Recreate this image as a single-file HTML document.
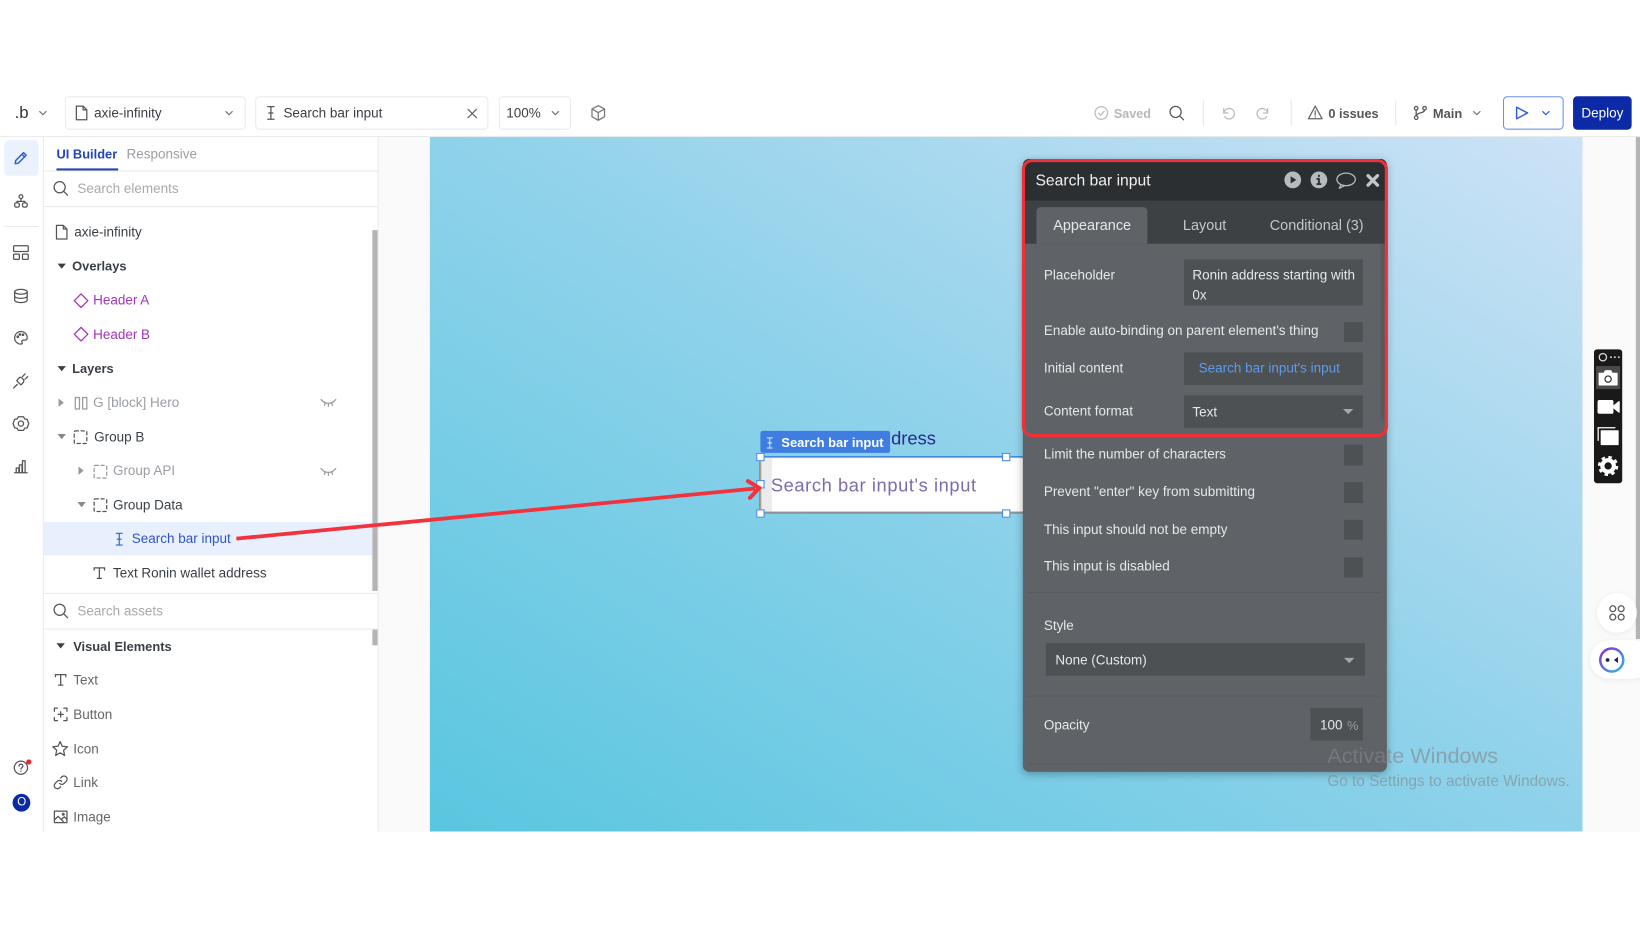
<!DOCTYPE html>
<html lang="en"><head><meta charset="utf-8"><title>Bubble editor</title>
<style>
html,body{margin:0;padding:0;width:1640px;height:924px;overflow:hidden;background:#fff}
#w{position:absolute;left:0;top:0;width:1568px;height:884px;transform:scale(1.04592);transform-origin:0 0;filter:blur(.35px);font-family:"Liberation Sans",sans-serif;color:#3a3f45;font-size:12.9px}
#w div,#w svg{position:absolute}
.t{white-space:nowrap;line-height:1;transform:translateY(calc(-50% + .8px))}
svg{overflow:visible;fill:none;stroke:#555;stroke-width:1.2;stroke-linecap:round;stroke-linejoin:round}
.g{color:#9a9ea3}.p{color:#a135b8}.b{font-weight:bold;font-size:12.3px}
.l{color:#e6e7e8}.in{background:#4d5154}
.tri{width:0;height:0;border-left:4px solid transparent;border-right:4px solid transparent;border-top:5px solid #3a3f45}
.trr{width:0;height:0;border-top:4px solid transparent;border-bottom:4px solid transparent;border-left:5px solid #999}
.box{border:1px solid #e9eaec;border-radius:4px;box-sizing:border-box;background:#fff}
.sep{width:1px;height:24px;background:#e6e6e6;top:96px}
.h{width:6px;height:6px;background:#fff;border:1px solid #3f8ae0}
.cb{left:1285px;width:18px;height:19px;background:#4d5154}
.car{width:0;height:0;border-left:5px solid transparent;border-right:5px solid transparent;border-top:5px solid #a5a8ab}
</style></head><body>
<div id="w">
<svg width="0" height="0" style="left:0;top:0"><defs>
<symbol id="s" viewBox="0 0 16 16"><circle cx="7" cy="7" r="5.3"/><path d="M11 11l3.600 3.600"/></symbol>
<symbol id="d" viewBox="0 0 16 16"><path d="M3 1.500h6.500l3.500 3.500v9.500H3zM9.500 1.500V5H13"/></symbol>
<symbol id="c" viewBox="0 0 12 12"><path d="M3 4.700L6 7.700l3-3" stroke="#777"/></symbol>
<symbol id="cb" viewBox="0 0 12 12"><path d="M3 4.700L6 7.700l3-3" stroke="#2f5fd8"/></symbol>
<symbol id="i" viewBox="0 0 12 16"><path d="M3 2h6M3 14h6M6 2v12M4 8h4"/></symbol>
<symbol id="gr" viewBox="0 0 14 14"><rect x="1" y="1" width="12" height="12" rx="1" stroke-dasharray="3 2.600"/></symbol>
<symbol id="T" viewBox="0 0 14 14"><path d="M2 4V2h10v2M7 2v10M5 12h4"/></symbol>
<symbol id="e" viewBox="0 0 16 8"><path d="M2 2c3 3.500 9 3.500 12 0M1 1l2 2M15 1l-2 2M5 4l-.8 2.500M8 5v2.500M11 4l.8 2.500" stroke="#999"/></symbol>
</defs></svg>

<!-- canvas -->
<div style="left:362px;top:131px;width:1206px;height:664px;background:#fafafa"></div>
<div style="left:411px;top:131px;width:1102px;height:664px;background:linear-gradient(to top right,#5ac6e0 0%,#8ed2ea 50%,#cde2f6 100%)"></div>
<div style="left:1564px;top:131px;width:4px;height:480px;background:#b4b4b4"></div>

<!-- toolbar -->
<div style="left:0;top:130px;width:1568px;height:1px;background:#e8eaec"></div>
<div class="t" style="left:14px;top:108px;font-size:16px;color:#333">.b</div>
<svg style="left:35px;top:102px" width="12" height="12"><use href="#c"/></svg>
<div class="box" style="left:62px;top:92px;width:173px;height:32px"></div>
<svg style="left:70px;top:100px" width="16" height="16"><use href="#d"/></svg>
<div class="t" style="left:90px;top:108px">axie-infinity</div>
<svg style="left:213px;top:102px" width="12" height="12"><use href="#c"/></svg>
<div class="box" style="left:244px;top:92px;width:223px;height:32px"></div>
<svg style="left:253px;top:100px" width="12" height="16"><use href="#i"/></svg>
<div class="t" style="left:271px;top:108px">Search bar input</div>
<svg style="left:446px;top:103px" width="11" height="11"><path d="M1.500 1.500l8 8M9.500 1.500l-8 8" stroke="#666"/></svg>
<div class="box" style="left:477px;top:92px;width:69px;height:32px"></div>
<div class="t" style="left:484px;top:108px">100%</div>
<svg style="left:525px;top:102px" width="12" height="12"><use href="#c"/></svg>
<svg style="left:564px;top:100px" width="16" height="16"><path d="M8 1l6 3.200v7.400L8 15l-6-3.400V4.200zM2 4.200l6 3.400 6-3.400M8 7.600V15" stroke="#777"/></svg>

<svg style="left:1046px;top:101px" width="14" height="14"><circle cx="7" cy="7" r="6" stroke="#bbb"/><path d="M4.300 7.200l2 2 3.500-4" stroke="#bbb"/></svg>
<div class="t b" style="left:1065px;top:108px;color:#b5b7ba;font-size:12px">Saved</div>
<svg style="left:1117px;top:100px" width="16" height="16"><use href="#s"/></svg>
<div class="sep" style="left:1150px"></div>
<svg style="left:1167px;top:101px" width="14" height="14"><path d="M3 3v4h4M3.200 7A5 5 0 1 1 4 10.500" stroke="#bbb"/></svg>
<svg style="left:1201px;top:101px" width="14" height="14"><path d="M11 3v4H7M10.800 7A5 5 0 1 0 10 10.500" stroke="#bbb"/></svg>
<div class="sep" style="left:1234px"></div>
<svg style="left:1250px;top:100px" width="15" height="15"><path d="M7.500 1.500L14 13.500H1zM7.500 6v4M7.500 11.800v.2" stroke="#666"/></svg>
<div class="t b" style="left:1270px;top:108px;font-size:12.200px;color:#555">0 issues</div>
<div class="sep" style="left:1334px"></div>
<svg style="left:1351px;top:101px" width="14" height="14"><circle cx="3" cy="2.500" r="1.700"/><circle cx="3" cy="11.500" r="1.700"/><circle cx="11" cy="2.500" r="1.700"/><path d="M3 4.200v5.600M11 4.200C11 7.500 5 6 3.500 9"/></svg>
<div class="t b" style="left:1370px;top:108px;color:#555">Main</div>
<svg style="left:1406px;top:102px" width="12" height="12"><use href="#c"/></svg>
<div style="left:1437px;top:92px;width:58px;height:32px;box-sizing:border-box;border:1.500px solid #6a90ea;border-radius:4px"></div>
<svg style="left:1448px;top:101px" width="14" height="14"><path d="M2 1.500l10.500 5.500L2 12.500z" stroke="#2f5fd8" stroke-width="1.400"/></svg>
<svg style="left:1472px;top:102px" width="12" height="12"><use href="#cb"/></svg>
<div style="left:1504px;top:92px;width:56px;height:32px;background:#0c2aa6;border-radius:4px"></div>
<div class="t" style="left:1512px;top:108px;color:#fff">Deploy</div>

<!-- rail -->
<div style="left:41px;top:131px;width:1px;height:664px;background:#e8eaec"></div>
<div style="left:4px;top:134px;width:33px;height:34px;background:#ebf1fd;border-radius:4px"></div>
<svg style="left:13px;top:144px" width="14" height="14"><path d="M2 9.500L9.500 2 12 4.500 4.500 12 1.500 12.500zM8 3.500L10.500 6" stroke="#2f5fd8" stroke-width="1.400"/></svg>
<svg style="left:13px;top:185px" width="14" height="14"><circle cx="7" cy="3" r="1.800"/><rect x="1" y="9" width="4.500" height="4" rx="1.500"/><rect x="8.500" y="9" width="4.500" height="4" rx="1.500"/><path d="M7 5v2.500M3.200 9V7.500h7.600V9"/></svg>
<div style="left:4px;top:216px;width:33px;height:1px;background:#e8eaec"></div>
<svg style="left:12px;top:234px" width="16" height="15"><rect x="1" y="1" width="14" height="5.500" rx=".8"/><rect x="1" y="9" width="5.500" height="5" rx=".8"/><rect x="9.500" y="9" width="5.500" height="5" rx=".8"/></svg>
<svg style="left:13px;top:276px" width="14" height="14"><ellipse cx="7" cy="3" rx="6" ry="2.300"/><path d="M1 3v8c0 1.300 2.700 2.300 6 2.300s6-1 6-2.300V3M1 7c0 1.300 2.700 2.300 6 2.300S13 8.300 13 7"/></svg>
<svg style="left:13px;top:316px" width="14" height="14"><path d="M7 1a6 6 0 0 0 0 12c1.500 0 1.500-1 1-1.800-.6-1 0-2 1.300-2H11c1.300 0 2-1 2-2.500C13 3.500 10.300 1 7 1z"/><circle cx="4" cy="6" r=".7"/><circle cx="6" cy="3.800" r=".7"/><circle cx="9" cy="4" r=".7"/></svg>
<svg style="left:12px;top:356px" width="16" height="16"><path d="M1 15l3.500-3.500M4 8l4 4 2-2c1-1.200 1-2.500 0-3.500L9 5.500C8 4.500 6.800 4.700 6 5.500zM9.500 4L12 1.500M12 6.500L14.500 4"/></svg>
<svg style="left:12px;top:397px" width="16" height="16"><path d="M5.500 1.500h5l1 2 2.500.5 1.500 4-1.500 4-2.500.5-1 2h-5l-1-2-2.500-.5L.5 8 2 4l2.500-.5z"/><circle cx="8" cy="8" r="2.500"/></svg>
<svg style="left:13px;top:439px" width="14" height="14"><path d="M1 13h12M2.500 13V8.500h2.500V13M5.500 13V5.500H8V13M8.500 13V1.500H11V13"/></svg>
<svg style="left:13px;top:727px" width="14" height="14"><circle cx="7" cy="7" r="6.300"/><path d="M5.200 5.500C5.200 4.300 6 3.700 7 3.700s1.900.7 1.900 1.700c0 1.500-1.900 1.500-1.900 3M7 10.300v.2"/></svg>
<div style="left:25px;top:726px;width:5px;height:5px;border-radius:50%;background:#f0222c"></div>
<div style="left:12px;top:759px;width:17px;height:17px;border-radius:50%;background:#0c2aa6"></div>
<div class="t" style="left:16.500px;top:767px;color:#fff;font-size:11px">O</div>

<!-- sidebar -->
<div style="left:42px;top:131px;width:320px;height:664px;background:#fff;border-right:1px solid #e8eaec;box-sizing:border-box"></div>
<div class="t b" style="left:54px;top:147px;color:#2244b8">UI Builder</div>
<div class="t" style="left:121px;top:147px;color:#9a9ea3">Responsive</div>
<div style="left:42px;top:163px;width:319px;height:1px;background:#e8eaec"></div>
<div style="left:54px;top:161px;width:59px;height:2px;background:#2244b8"></div>
<svg style="left:50px;top:172px" width="16" height="16"><use href="#s"/></svg>
<div class="t g" style="left:74px;top:180px;color:#a6a9ad">Search elements</div>
<div style="left:42px;top:197px;width:319px;height:1px;background:#e8eaec"></div>

<svg style="left:51px;top:214px" width="16" height="16"><use href="#d"/></svg>
<div class="t" style="left:71px;top:222px">axie-infinity</div>
<div class="tri" style="left:55px;top:252px"></div>
<div class="t b" style="left:69px;top:254px">Overlays</div>
<svg style="left:70px;top:280px" width="15" height="15"><path d="M7.500 1L14 7.500 7.500 14 1 7.500z" stroke="#a135b8"/></svg>
<div class="t p" style="left:89px;top:287px">Header A</div>
<svg style="left:70px;top:312px" width="15" height="15"><path d="M7.500 1L14 7.500 7.500 14 1 7.500z" stroke="#a135b8"/></svg>
<div class="t p" style="left:89px;top:320px">Header B</div>
<div class="tri" style="left:55px;top:350px"></div>
<div class="t b" style="left:69px;top:352px">Layers</div>

<div class="trr" style="left:56px;top:381px"></div>
<svg style="left:71px;top:379px" width="13" height="13"><rect x="1" y="1" width="4" height="11" stroke="#999"/><rect x="8" y="1" width="4" height="11" stroke="#999"/></svg>
<div class="t g" style="left:89px;top:385px">G [block] Hero</div>
<svg style="left:306px;top:381px" width="16" height="8"><use href="#e"/></svg>
<div class="tri" style="left:55px;top:415px;border-top-color:#888"></div>
<svg style="left:70px;top:411px" width="14" height="14"><use href="#gr"/></svg>
<div class="t" style="left:90px;top:418px">Group B</div>
<div class="trr" style="left:75px;top:446px"></div>
<svg style="left:89px;top:444px" width="14" height="14"><use href="#gr" stroke="#999"/></svg>
<div class="t g" style="left:108px;top:450px">Group API</div>
<svg style="left:306px;top:447px" width="16" height="8"><use href="#e"/></svg>
<div class="tri" style="left:74px;top:480px;border-top-color:#888"></div>
<svg style="left:89px;top:476px" width="14" height="14"><use href="#gr"/></svg>
<div class="t" style="left:108px;top:483px">Group Data</div>
<div style="left:42px;top:499px;width:314px;height:32px;background:#e8f0fd"></div>
<svg style="left:108px;top:508px" width="12" height="15"><use href="#i" stroke="#2f5fd8"/></svg>
<div class="t" style="left:126px;top:515px;color:#2f55c8">Search bar input</div>
<svg style="left:88px;top:541px" width="14" height="14"><use href="#T"/></svg>
<div class="t" style="left:108px;top:548px">Text Ronin wallet address</div>
<div style="left:356px;top:220px;width:5px;height:345px;background:#b4b4b4"></div>
<div style="left:42px;top:567px;width:319px;height:1px;background:#e8eaec"></div>
<svg style="left:50px;top:576px" width="16" height="16"><use href="#s"/></svg>
<div class="t" style="left:74px;top:584px;color:#a6a9ad">Search assets</div>
<div style="left:42px;top:601px;width:319px;height:1px;background:#e8eaec"></div>
<div style="left:356px;top:602px;width:5px;height:15px;background:#b4b4b4"></div>
<div class="tri" style="left:54px;top:615px"></div>
<div class="t b" style="left:70px;top:618px">Visual Elements</div>
<svg style="left:51px;top:643px" width="14" height="14"><use href="#T"/></svg>
<div class="t" style="left:70px;top:650px;color:#666">Text</div>
<svg style="left:51px;top:676px" width="14" height="14"><path d="M1 4V1h3M10 1h3v3M13 10v3h-3M4 13H1v-3M7 4.500v5M4.500 7h5"/></svg>
<div class="t" style="left:70px;top:683px;color:#666">Button</div>
<svg style="left:50px;top:708px" width="15" height="15"><path d="M7.500 1l2 4.500 5 .5-3.700 3.300 1 5-4.300-2.500-4.300 2.500 1-5L.5 6l5-.5z"/></svg>
<div class="t" style="left:70px;top:716px;color:#666">Icon</div>
<svg style="left:51px;top:741px" width="14" height="14"><path d="M6 8a3 3 0 0 0 4.300 0l2-2A3 3 0 0 0 8 1.800L7 2.800M8 6a3 3 0 0 0-4.300 0l-2 2A3 3 0 0 0 6 12.200l1-1"/></svg>
<div class="t" style="left:70px;top:748px;color:#666">Link</div>
<svg style="left:51px;top:774px" width="14" height="14"><rect x="1" y="1.500" width="12" height="11"/><path d="M1 10l3.500-3.500 5 5M8 9l2.500-2 2.500 2.500"/><circle cx="9.500" cy="4.500" r=".8"/></svg>
<div class="t" style="left:70px;top:781px;color:#666">Image</div>

<!-- element on canvas -->
<div class="t" style="left:852px;top:419px;font-size:17.500px;color:#2d2a8e">dress</div>
<div style="left:727px;top:412px;width:124px;height:21px;background:#3f7de0;border-radius:2px"></div>
<svg style="left:731px;top:417px" width="10" height="13"><use href="#i" stroke="#dbe6fa"/></svg>
<div class="t b" style="left:747px;top:423px;color:#fff;font-size:12.400px">Search bar input</div>
<div style="left:727px;top:437px;width:252px;height:53px;background:#fff;border:1px solid #d99a55;box-sizing:border-box;box-shadow:0 0 0 1px #3f8ae0"></div>
<div style="left:728px;top:438px;width:10px;height:51px;background:#ebebeb"></div>
<div class="t" style="left:737px;top:464px;font-size:17.500px;letter-spacing:.56px;color:#7d6bab">Search bar input's input</div>
<div class="h" style="left:722.500px;top:433px"></div><div class="h" style="left:958px;top:433px"></div>
<div class="h" style="left:722.500px;top:459px"></div><div class="h" style="left:722.500px;top:487px"></div>
<div class="h" style="left:958px;top:487px"></div>

<!-- red arrow -->
<svg style="left:0;top:0" width="1568" height="884"><path d="M226 515L722 467" stroke="#f2323c" stroke-width="3.600" stroke-linecap="butt"/><path d="M715 460L726 466.500 717 476" stroke="#f2323c" stroke-width="3.800"/></svg>

<!-- panel -->
<div style="left:978px;top:152px;width:348px;height:586px;background:#5f6367;border-radius:6px;box-shadow:0 2px 8px rgba(0,0,0,.3)"></div>
<div style="left:978px;top:152px;width:348px;height:40px;background:#2b2f31;border-radius:6px 6px 0 0"></div>
<div class="t" style="left:990px;top:172px;color:#f0f0f0;font-size:15px">Search bar input</div>
<svg style="left:1228px;top:164px" width="16" height="16"><circle cx="8" cy="8" r="8" fill="#b8bbbd" stroke="none"/><path d="M6 4.500l5.500 3.500L6 11.500z" fill="#2b2f31" stroke="none"/></svg>
<svg style="left:1253px;top:164px" width="16" height="16"><circle cx="8" cy="8" r="8" fill="#b8bbbd" stroke="none"/><path d="M8 7v5M8 3.800v.6M6.500 7H8M6.500 12h3" stroke="#2b2f31" stroke-width="1.800"/></svg>
<svg style="left:1277px;top:164px" width="20" height="17"><ellipse cx="10" cy="7.500" rx="8.800" ry="6" stroke="#b8bbbd"/><path d="M5 12.500L3.500 16l5-2.500" stroke="#b8bbbd"/></svg>
<svg style="left:1306px;top:166px" width="13" height="13"><path d="M2 2l9 9M11 2l-9 9" stroke="#c4c6c8" stroke-width="3.200"/></svg>
<div style="left:978px;top:192px;width:348px;height:41px;background:#3d4144"></div>
<div style="left:991px;top:198px;width:106px;height:35px;background:#5f6367;border-radius:4px 4px 0 0"></div>
<div class="t l" style="left:1007px;top:215px;font-size:13.800px">Appearance</div>
<div class="t" style="left:1131px;top:215px;font-size:13.800px;color:#c5c7c9">Layout</div>
<div class="t" style="left:1214px;top:215px;font-size:13.800px;color:#c5c7c9">Conditional (3)</div>
<div style="left:1320px;top:233px;width:4px;height:168px;background:#565a5d"></div>

<div class="t l" style="left:998px;top:263px">Placeholder</div>
<div class="in" style="left:1132px;top:248px;width:171px;height:44px"></div>
<div class="t l" style="left:1140px;top:263px">Ronin address starting with</div>
<div class="t l" style="left:1140px;top:282px">0x</div>
<div class="t l" style="left:998px;top:316px">Enable auto-binding on parent element's thing</div>
<div class="cb" style="top:308px"></div>
<div class="t l" style="left:998px;top:352px">Initial content</div>
<div class="in" style="left:1132px;top:337px;width:171px;height:31px"></div>
<div class="t" style="left:1146px;top:352px;color:#5b9bee">Search bar input's input</div>
<div class="t l" style="left:998px;top:393px">Content format</div>
<div class="in" style="left:1132px;top:378px;width:171px;height:31px"></div>
<div class="t l" style="left:1140px;top:394px">Text</div>
<div class="car" style="left:1284px;top:391px"></div>
<div class="t l" style="left:998px;top:434px">Limit the number of characters</div>
<div class="cb" style="top:425px;height:20px"></div>
<div class="t l" style="left:998px;top:470px">Prevent "enter" key from submitting</div>
<div class="cb" style="top:461px;height:20px"></div>
<div class="t l" style="left:998px;top:506px">This input should not be empty</div>
<div class="cb" style="top:497px"></div>
<div class="t l" style="left:998px;top:541px">This input is disabled</div>
<div class="cb" style="top:533px"></div>
<div style="left:982px;top:566px;width:338px;height:1px;background:#585c5f"></div>
<div class="t l" style="left:998px;top:598px">Style</div>
<div class="in" style="left:1000px;top:615px;width:305px;height:31px"></div>
<div class="t l" style="left:1009px;top:631px">None (Custom)</div>
<div class="car" style="left:1285px;top:629px"></div>
<div style="left:982px;top:665px;width:338px;height:1px;background:#585c5f"></div>
<div class="t l" style="left:998px;top:693px">Opacity</div>
<div class="in" style="left:1253px;top:677px;width:50px;height:31px"></div>
<div class="t l" style="left:1262px;top:693px">100</div>
<div class="t" style="left:1288px;top:693px;color:#9a9da0;font-size:12px">%</div>
<div style="left:982px;top:730px;width:338px;height:1px;background:#585c5f"></div>

<!-- red outline -->
<div style="left:977px;top:152px;width:350px;height:266px;box-sizing:border-box;border:3px solid #ef3038;border-radius:10px"></div>

<!-- watermark -->
<div class="t" style="left:1269px;top:723px;font-size:20.700px;color:rgba(130,135,140,.62)">Activate Windows</div>
<div class="t" style="left:1269px;top:747px;font-size:14.700px;color:rgba(130,135,140,.62)">Go to Settings to activate Windows.</div>

<!-- right widgets -->
<div style="left:1524px;top:334px;width:27px;height:128px;background:#191919;border-radius:3px"></div>
<div style="left:1526px;top:350px;width:23px;height:22px;background:#4a4a4a"></div>
<svg style="left:1528px;top:337px" width="9" height="9"><circle cx="4.500" cy="4.500" r="3.500" stroke="#ddd"/></svg>
<svg style="left:1539px;top:340px" width="10" height="3"><path d="M1 1.500h.5M4.700 1.500h.5M8.500 1.500h.5" stroke="#ddd" stroke-width="1.500"/></svg>
<svg style="left:1528px;top:354px" width="19" height="15"><path d="M1 3h4.500l1.500-2.500h5L13.500 3H18v11H1z" fill="#fff" stroke="#fff"/><circle cx="9.500" cy="8.500" r="3" stroke="#333"/></svg>
<svg style="left:1527px;top:381px" width="22" height="16"><rect x="1" y="2" width="14" height="12" rx="1" fill="#fff" stroke="#fff"/><path d="M16 7l5-4v10l-5-4z" fill="#fff" stroke="#fff"/></svg>
<svg style="left:1527px;top:408px" width="21" height="18"><path d="M1 13V1h16" stroke="#fff"/><rect x="4" y="4" width="16" height="13" fill="#fff" stroke="#fff"/></svg>
<svg style="left:1527px;top:435px" width="21" height="21"><circle cx="10.500" cy="10.500" r="5.500" stroke="#fff" stroke-width="4"/><circle cx="10.500" cy="10.500" r="8.200" stroke="#fff" stroke-width="3" stroke-linecap="butt" stroke-dasharray="3.200 3.240"/></svg>

<div style="left:1527px;top:567px;width:38px;height:38px;border-radius:50%;background:#fff;box-shadow:0 1px 5px rgba(0,0,0,.07)"></div>
<svg style="left:1538px;top:578px" width="16" height="16"><circle cx="4" cy="4" r="2.800"/><circle cx="12" cy="4" r="2.800"/><circle cx="4" cy="12" r="2.800"/><circle cx="12" cy="12" r="2.800"/></svg>
<div style="left:1520px;top:612px;width:60px;height:37px;border-radius:19px;background:#fff;box-shadow:0 1px 5px rgba(0,0,0,.07)"></div>
<svg style="left:1528px;top:618px" width="26" height="26"><defs><linearGradient id="r" x1="0" y1="0" x2="1" y2="1"><stop offset="0" stop-color="#8a2fd0"/><stop offset="1" stop-color="#2fb6ea"/></linearGradient></defs><circle cx="13" cy="13" r="11" stroke="url(#r)" stroke-width="2.400"/><circle cx="9" cy="13" r="1.800" fill="#222840" stroke="none"/><path d="M19 10l-4 3 4 3z" fill="#222840" stroke="none"/></svg>
</div>
</body></html>
